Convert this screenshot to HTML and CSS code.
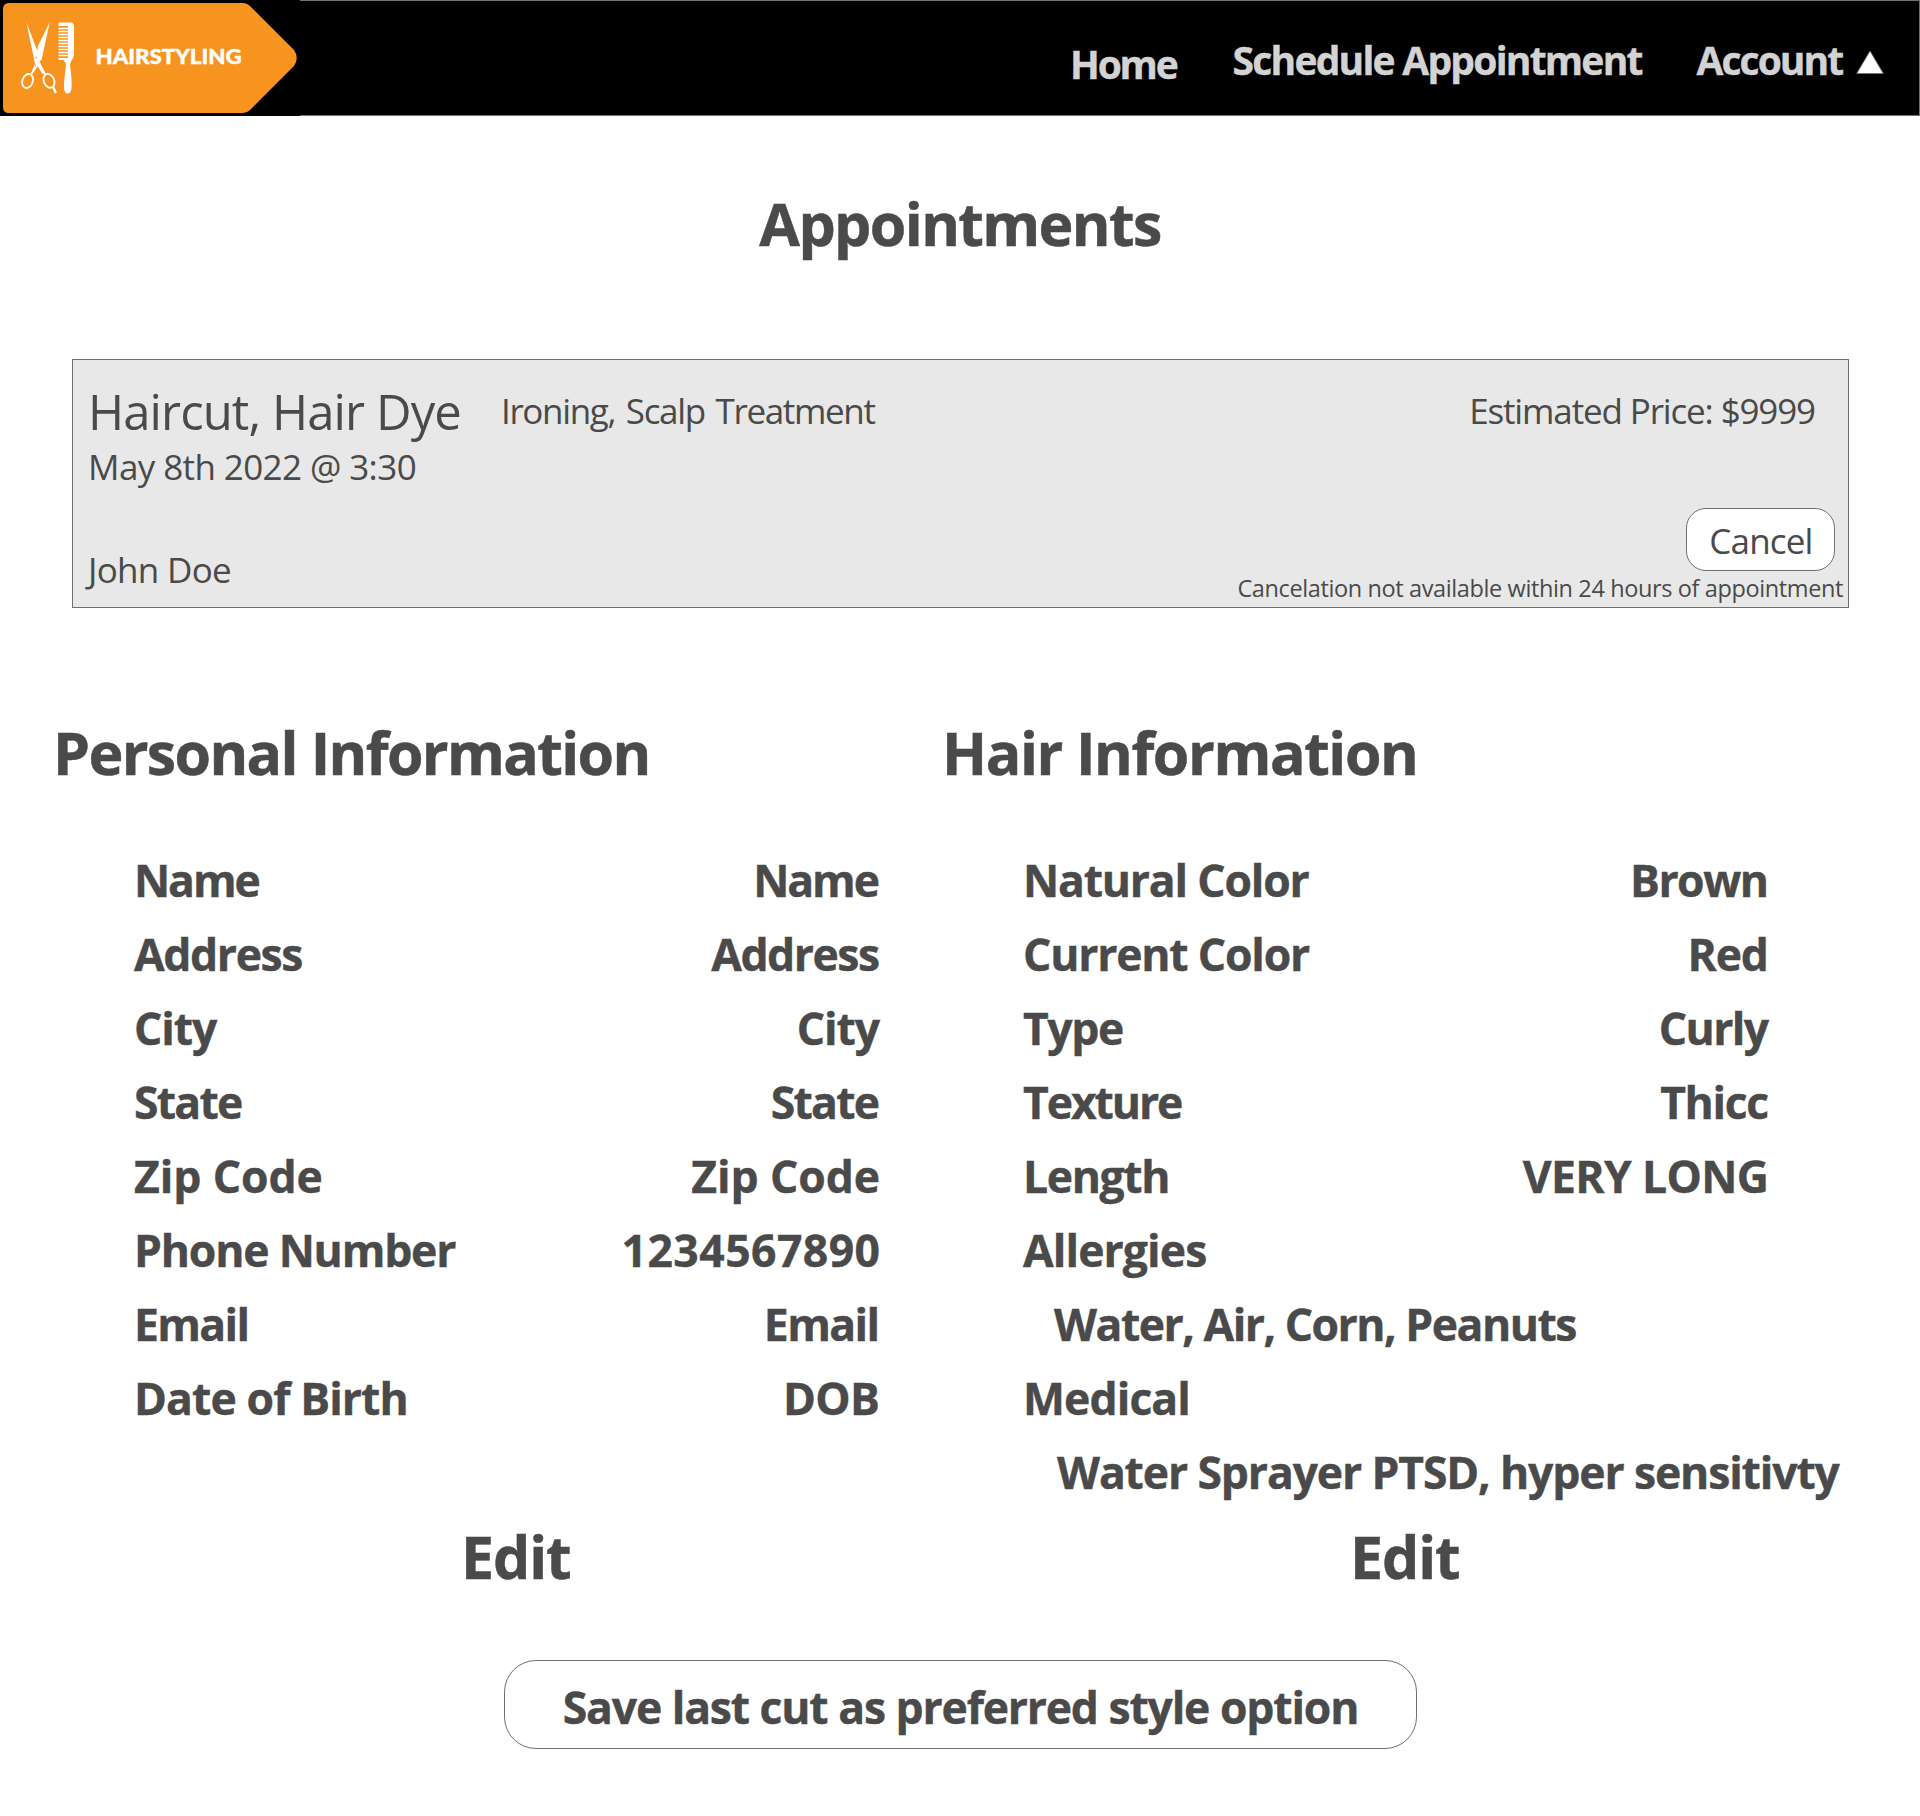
FILE: index.html
```html
<!DOCTYPE html>
<html lang="en">
<head>
<meta charset="utf-8">
<title>Hairstyling – Account</title>
<link rel="stylesheet" href="styles.css">
</head>
<body>
<header class="topbar">
  <svg class="logo" width="300" height="116" viewBox="0 0 300 116" role="img" aria-label="Hairstyling">
    <rect width="300" height="116" fill="#000"/>
    <path fill="#f7941f" d="M9 3H243Q247 3 250 6L294 50Q299.500 58 294 66L250 110Q247 113 243 113H9Q3 113 3 107V9Q3 3 9 3Z"/>
    <g fill="#fff">
      <path d="M26.300 22L38.500 54L39.800 62L44.500 73L42.500 74L37.500 66Q34.500 64 34 59Z"/>
      <path d="M49.800 22L39 54L36 63L32.500 74L31 73.500L34.500 65L38 46Z"/>
      <path d="M49.800 22L41.500 60L38 62L37.500 52Z"/>
    </g>
    <g fill="none" stroke="#fff" stroke-width="1.800">
      <path d="M37.500 65L31.500 74M39.500 64L45 74"/>
      <ellipse cx="27.600" cy="81" rx="5.200" ry="7.200" transform="rotate(20 27.600 81)"/>
      <ellipse cx="49" cy="80.800" rx="5.200" ry="7.200" transform="rotate(-24 49 80.800)"/>
      <path d="M53 87L56 93" stroke-width="2.400"/>
    </g>
    <circle cx="36.300" cy="57.600" r=".8" fill="#f7941f"/>
    <path fill="#fff" d="M60 22.500H71Q74 23 74 26.500V53Q74 58 71.500 60.500Q70 62.500 70 66Q72 80 71.600 88Q71 93.600 67.500 93.600Q64.500 93.600 64 88Q63.800 80 66 66Q66 62 63.500 60H58.500V58H68V26H58.500Q58 22.800 60 22.500Z"/>
    <path stroke="#fff" stroke-width="1.400" d="M58.500 28.500H68M58.500 31.500H68M58.500 34.500H68M58.500 37.500H68M58.500 40.500H68M58.500 43.500H68M58.500 46.500H68M58.500 49.500H68M58.500 52.500H68M58.500 55.500H68"/>
    <text class="logo-text" x="95.500" y="63.700" textLength="146" lengthAdjust="spacingAndGlyphs">HAIRSTYLING</text>
  </svg>
  <nav class="menu">
    <a class="t menu-home">Home</a>
    <a class="t menu-schedule">Schedule Appointment</a>
    <a class="t menu-account">Account</a>
    <svg class="caret" width="28" height="24" viewBox="0 0 28 24"><path d="M14 1L27.300 23.500H.7Z" fill="#fff" stroke="#707070" stroke-width=".8"/></svg>
  </nav>
</header>

<main class="page">
  <h1 class="t heading title">Appointments</h1>

  <section class="card">
    <div class="card-main">
      <div class="card-top">
        <span class="t service">Haircut, Hair Dye</span>
        <span class="t addons">Ironing, Scalp Treatment</span>
      </div>
      <div class="t date">May 8th 2022 @ 3:30</div>
      <div class="t stylist">John Doe</div>
    </div>
    <div class="card-side">
      <div class="t price">Estimated Price: $9999</div>
      <button class="cancel"><span class="t">Cancel</span></button>
      <div class="t note">Cancelation not available within 24 hours of appointment</div>
    </div>
  </section>

  <div class="info">
    <section class="column">
      <h2 class="t heading k16">Personal Information</h2>
      <dl class="rows">
        <div class="row"><dt class="t k21">Name</dt><dd class="t k21">Name</dd></div>
        <div class="row"><dt class="t k14">Address</dt><dd class="t k15">Address</dd></div>
        <div class="row"><dt class="t k11">City</dt><dd class="t k11">City</dd></div>
        <div class="row"><dt class="t k17">State</dt><dd class="t k17">State</dd></div>
        <div class="row"><dt class="t k1">Zip Code</dt><dd class="t k1">Zip Code</dd></div>
        <div class="row"><dt class="t k12">Phone Number</dt><dd class="t w4">1234567890</dd></div>
        <div class="row"><dt class="t k16">Email</dt><dd class="t k16">Email</dd></div>
        <div class="row"><dt class="t k9">Date of Birth</dt><dd class="t k7">DOB</dd></div>
      </dl>
      <a class="t heading edit">Edit</a>
    </section>
    <section class="column">
      <h2 class="t heading k14">Hair Information</h2>
      <dl class="rows">
        <div class="row"><dt class="t k12">Natural Color</dt><dd class="t k15">Brown</dd></div>
        <div class="row"><dt class="t k12">Current Color</dt><dd class="t k11">Red</dd></div>
        <div class="row"><dt class="t k14">Type</dt><dd class="t k16">Curly</dd></div>
        <div class="row"><dt class="t k21">Texture</dt><dd class="t k14">Thicc</dd></div>
        <div class="row"><dt class="t k14">Length</dt><dd class="t k7">VERY LONG</dd></div>
        <div class="row"><dt class="t k9">Allergies</dt></div>
        <div class="row detail"><dd class="t k15">Water, Air, Corn, Peanuts</dd></div>
        <div class="row"><dt class="t k9">Medical</dt></div>
        <div class="row detail detail-wide"><dd class="t sensitivity">Water Sprayer PTSD, hyper sensitivty</dd></div>
      </dl>
      <a class="t heading edit">Edit</a>
    </section>
  </div>

  <button class="save"><span class="t k12">Save last cut as preferred style option</span></button>
</main>
</body>
</html>
```
FILE: styles.css
```css
* { box-sizing: border-box; }

body {
  margin: 0;
  min-height: 1816px;
  background: #fff;
  color: #4a4a4a;
  font-family: "Open Sans", "Noto Sans", sans-serif;
}

/* Text with its own tracking */
.t {
  --ls: 0px;
  letter-spacing: var(--ls);
  white-space: nowrap;
}
.k1 { --ls: -0.1px; }
.k7 { --ls: -0.65px; }
.k9 { --ls: -0.9px; }
.k11 { --ls: -1.12px; }
.k12 { --ls: -1.2px; }
.k14 { --ls: -1.4px; }
.k15 { --ls: -1.5px; }
.k16 { --ls: -1.63px; }
.k17 { --ls: -1.76px; }
.k21 { --ls: -2.08px; }
.w4 { --ls: 0.44px; }

/* Header */
.topbar {
  display: flex;
  height: 116px;
  background: #000;
  box-shadow: inset -1px 0 #707070, inset 0 1px #707070, inset 0 -1px #707070;
}
.logo { display: block; flex: none; }
.logo-text {
  fill: #fff;
  stroke: #fff;
  stroke-width: 0.4px;
  font-family: Lato, sans-serif;
  font-size: 20px;
  font-weight: 900;
}
.menu {
  display: grid;
  grid-template-columns: 162.500px 464px 159.500px 28px;
  align-items: start;
  margin-left: auto;
  padding: 30px 36px 0 0;
  color: #d3d3d3;
  font-size: 39px;
  font-weight: 700;
  line-height: 60px;
  -webkit-text-stroke: 0.4px;
}
.menu-home { --ls: -2.2px; margin-top: 4px; }
.menu-schedule { --ls: -1.76px; }
.menu-account { --ls: -1.95px; }
.caret { margin-top: 20px; }

/* Headings */
.heading {
  margin: 0;
  font-size: 59px;
  font-weight: 700;
  line-height: 80px;
  -webkit-text-stroke: 0.5px;
}
.title {
  --ls: -1.62px;
  padding-top: 67px;
  text-align: center;
}

/* Appointment card */
.card {
  display: flex;
  justify-content: space-between;
  width: 1777px;
  height: 249px;
  margin: 96px 0 0 72px;
  border: 1px solid #707070;
  background: #e8e8e8;
  font-size: 35px;
}
.card-main {
  display: flex;
  flex-direction: column;
  padding: 21px 0 12px 15px;
}
.card-top {
  display: flex;
  gap: 40px;
  line-height: 60px;
}
.service { --ls: -0.9px; font-size: 49px; }
.addons { --ls: -1.35px; word-spacing: 3px; }
.date { --ls: -0.6px; margin-top: 1px; line-height: 50px; }
.stylist { --ls: -0.7px; margin: auto 0 0; line-height: 50px; }
.card-side {
  display: flex;
  flex-direction: column;
  align-items: flex-end;
  padding: 21px 5px 3px 0;
}
.price { --ls: -1.14px; margin-right: 28px; line-height: 60px; }
.cancel {
  width: 149px;
  height: 63px;
  margin: auto 8px 0 0;
  padding: 0 0 0 1px;
  border: 1px solid #707070;
  border-radius: 20px;
  background: #fff;
  color: inherit;
  font: 400 35px/64px "Open Sans", sans-serif;
}
.cancel .t { --ls: -0.82px; }
.note { --ls: -0.38px; margin-top: 1px; font-size: 23.500px; line-height: 32px; }

/* Personal and hair information */
.info {
  display: grid;
  grid-template-columns: 889px 889px;
  height: 884px;
  margin: 104px 0 0 53px;
}
.column { display: flex; flex-direction: column; }
.rows {
  width: 746px;
  margin: 51px 0 0 81px;
  font-size: 44.500px;
  font-weight: 700;
  line-height: 74px;
  -webkit-text-stroke: 0.4px;
}
.row { display: flex; justify-content: space-between; }
.row dd { margin: 0 calc(-1 * var(--ls)) 0 0; }
.detail { padding-left: 31px; }
.detail-wide { padding-left: 34px; }
.sensitivity { --ls: -1.14px; }
.edit { --ls: -1.1px; margin: auto 0 0 408px; }

.save {
  display: block;
  width: 913px;
  height: 89px;
  margin: 64px auto 0 504px;
  padding: 0;
  border: 1px solid #707070;
  border-radius: 32px;
  background: #fff;
  color: inherit;
  font: 700 44.500px/92px "Open Sans", sans-serif;
  word-spacing: 0.400px;
  -webkit-text-stroke: 0.4px;
}
```
